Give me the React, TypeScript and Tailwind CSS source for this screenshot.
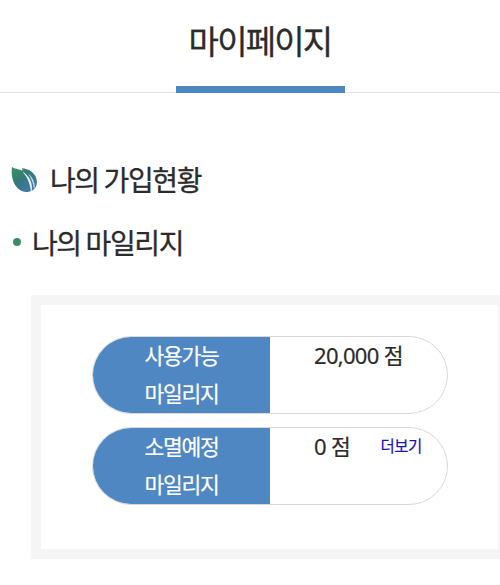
import React from 'react';

interface MileageRowProps {
  label: string[];
  value: string;
  moreLabel?: string;
}

const LeafIcon = () => (
  <svg className="mt-px h-[27px] w-[27px] shrink-0" viewBox="0 0 27 27" fill="none">
    <defs>
      <linearGradient id="leaf" x1="4" y1="2" x2="20" y2="25" gradientUnits="userSpaceOnUse">
        <stop stopColor="#3c8f62" />
        <stop offset="0.45" stopColor="#34797b" />
        <stop offset="1" stopColor="#3f78ad" />
      </linearGradient>
    </defs>
    <path
      d="M1 1C4 3.200 8 3.200 11.500 4.800L11 2.300C14 2.500 17.500 3.500 20 5.300C24 8.500 27 13 25.500 19C24.500 23.500 20 26 15 26C6 25.500 -1 15 1 1Z"
      fill="url(#leaf)"
    />
    <path d="M12.500 6.500C18.500 11 21.500 17.500 20.300 25C19.300 18.500 17.500 12 12.500 6.500Z" fill="#fff" stroke="#eaf6fa" strokeWidth="0.7" />
    <path d="M18 8.500C22 12.500 24 17.500 23.300 22.500C22.300 17.500 21 13 18 8.500Z" fill="#d5eaf2" stroke="#d5eaf2" strokeWidth="0.4" />
  </svg>
);

const MileageRow = ({ label, value, moreLabel }: MileageRowProps) => (
  <div className="flex h-[78px] overflow-hidden rounded-[39px] border border-[#d9d9d9] text-[21.5px] leading-[38px] tracking-[-1.3px] [-webkit-text-stroke:0.2px_currentColor]">
    <div className="w-[177px] shrink-0 bg-[#4f87c2] text-center text-white">
      {label.map((line) => (
        <div key={line} className="-mt-px mb-px">
          {line}
        </div>
      ))}
    </div>
    <div className="-mt-px flex items-start pl-[44px] text-[#2b2b2b]">
      <span className="font-['Noto_Sans',sans-serif] text-[22px] tracking-[-0.7px]">{value}</span>
      <span className="ml-[5px]">점</span>
      {moreLabel && (
        <a href="#" className="ml-[31px] text-[15.5px] leading-[36px] tracking-[-0.4px] text-[#1c10b8]">
          {moreLabel}
        </a>
      )}
    </div>
  </div>
);

export default function App() {
  return (
    <div className="h-[585px] w-[500px] overflow-hidden bg-white font-['Noto_Sans_CJK_KR',sans-serif] text-[#2b2b2b] [-webkit-text-stroke:0.3px_currentColor]">
      <header className="flex h-[93px] justify-center border-b border-[#e2e2e2]">
        <h1 className="ml-[20px] h-[93px] w-[169px] border-b-[7px] border-[#4f87c2] text-center text-[33px] leading-[80px] tracking-[-1.8px]">
          마이페이지
        </h1>
      </header>

      <h2 className="mt-[66px] flex h-[40px] items-center pl-[11px] text-[28px] leading-[40px] tracking-[-1.4px]">
        <LeafIcon />
        <span className="ml-[12px]">나의 가입현황</span>
      </h2>

      <h3 className="mt-[23px] flex h-[40px] items-center pl-[13px] text-[28px] leading-[40px] tracking-[-1.4px]">
        <span className="size-[8px] rounded-full bg-[#3d8e66]" />
        <span className="ml-[11px]">나의 마일리지</span>
      </h3>

      <section className="ml-[31px] mt-[33px] h-[264px] w-[477px] border-[10px] border-[#f5f5f5] pl-[51px] pt-[31px]">
        <div className="flex w-[356px] flex-col gap-[13px]">
          <MileageRow label={['사용가능', '마일리지']} value="20,000" />
          <MileageRow label={['소멸예정', '마일리지']} value="0" moreLabel="더보기" />
        </div>
      </section>
    </div>
  );
}
